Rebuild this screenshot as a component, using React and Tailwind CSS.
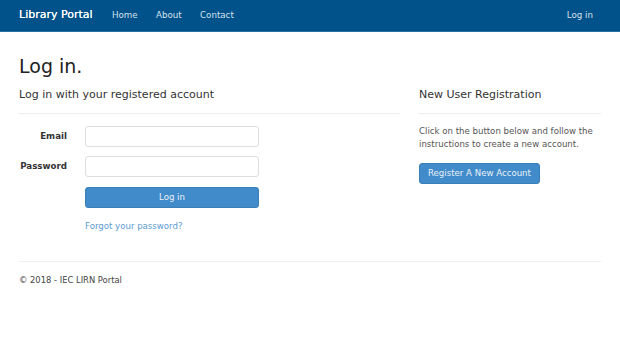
import React from "react";

const font = { fontFamily: '"DejaVu Sans", Verdana, sans-serif' };

export default function App() {
  return (
    <div className="min-h-[343px] bg-white text-[8.6px] text-[#333]" style={font}>
      {/* Navbar */}
      <nav className="h-[32px] bg-[#01518a] border-b border-[#2a6fa3] flex items-center px-[19px]">
        <span className="w-[93px] text-white text-[11px] [text-shadow:0_0_0.4px_#fff]">Library Portal</span>
        <div className="flex text-[#d6e2ee] text-[8.7px]">
          <span className="w-[44px]">Home</span>
          <span className="w-[44px]">About</span>
          <span>Contact</span>
        </div>
        <span className="ml-auto text-[#d6e2ee] text-[8.7px] mr-[8px]">Log in</span>
      </nav>

      <div className="px-[19px]">
        <h2 className="text-[19px] mt-[20px] leading-[28px] text-[#222]">Log in.</h2>

        <div className="flex mt-[6px]">
          {/* Left column */}
          <div className="w-[381px]">
            <h4 className="text-[11px] leading-[18px] text-[#333]">Log in with your registered account</h4>
            <div className="border-t border-[#eee] mt-[9px] mb-[12px]" />
            <div className="flex items-center h-[21px] mb-[9px]">
              <label className="w-[48px] text-right font-bold text-[8.7px] text-[#333]">Email</label>
              <input className="ml-[18px] w-[174px] h-[21px] border border-[#ddd] rounded-[3px]" />
            </div>
            <div className="flex items-center h-[21px] mb-[10px]">
              <label className="w-[48px] text-right font-bold text-[8.7px] text-[#333]">Password</label>
              <input className="ml-[18px] w-[174px] h-[21px] border border-[#ddd] rounded-[3px]" />
            </div>
            <div className="ml-[66px]">
              <button className="w-[174px] h-[21px] bg-[#428bca] border border-[#3b7fba] rounded-[3px] text-[#e8f1f9] text-[8.6px]">
                Log in
              </button>
              <div className="mt-[12px] text-[#5b9bd1] text-[8.6px]">Forgot your password?</div>
            </div>
          </div>

          {/* Right column */}
          <div className="ml-[19px] w-[182px]">
            <h4 className="text-[11px] leading-[18px] text-[#333]">New User Registration</h4>
            <div className="border-t border-[#eee] mt-[9px] mb-[11px]" />
            <p className="leading-[13px] text-[#555]">
              Click on the button below and follow the instructions to create a new account.
            </p>
            <button className="mt-[12px] px-[8px] h-[21px] bg-[#428bca] border border-[#3b7fba] rounded-[3px] text-[#e8f1f9] text-[8.6px]">
              Register A New Account
            </button>
          </div>
        </div>

        <div className="border-t border-[#f0f0f0] mt-[28px]" />
        <footer className="mt-[12px] text-[8.4px] text-[#444]">© 2018 - IEC LIRN Portal</footer>
      </div>
    </div>
  );
}
